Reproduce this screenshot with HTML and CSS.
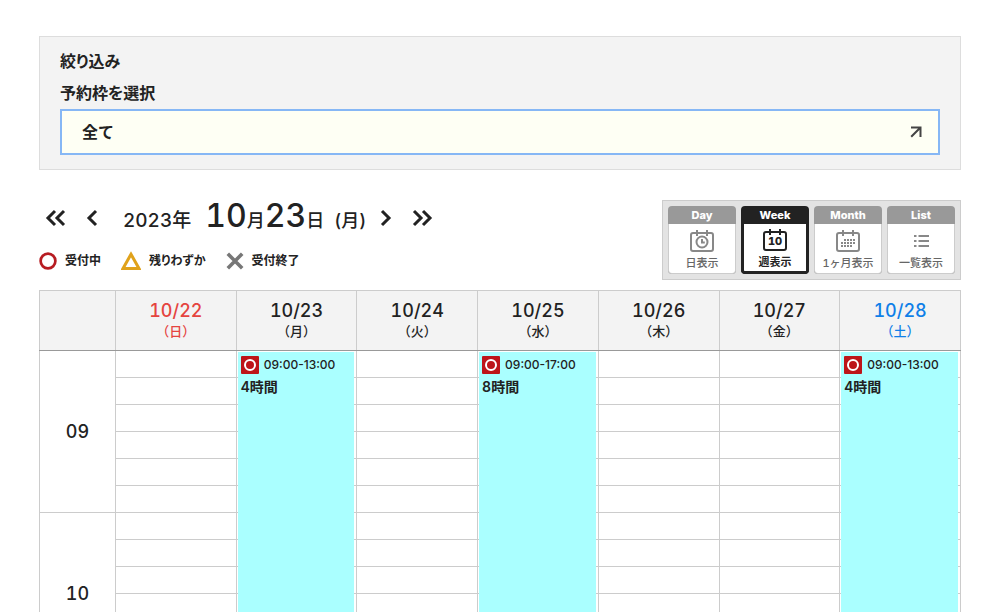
FILE: index.html
```html
<!DOCTYPE html>
<html lang="ja">
<head>
<meta charset="utf-8">
<meta name="viewport" content="width=device-width, initial-scale=1">
<title>予約カレンダー</title>
<link rel="stylesheet" href="styles.css">
</head>
<body>
<main class="page">
  <form class="filter">
    <h2 class="filter-title">絞り込み</h2>
    <label class="filter-label" for="slot">予約枠を選択</label>
    <div class="select-wrap">
      <select id="slot" class="select"><option>全て</option></select>
      <svg class="select-arrow" viewBox="0 0 12 12" aria-hidden="true"><path d="M1 1.5H10.5V11M10.2 1.8L1.2 10.8"/></svg>
    </div>
  </form>

  <div class="toolbar">
    <div class="toolbar-left">
      <div class="date-nav">
        <button class="nav-btn" type="button" aria-label="前の月"><svg viewBox="0 0 22 18"><path d="M10 2L3 9L10 16M19 2L12 9L19 16"/></svg></button>
        <button class="nav-btn nav-btn-single" type="button" aria-label="前の週"><svg viewBox="0 0 14 18"><path d="M11 2L4 9L11 16"/></svg></button>
        <h1 class="date"><span class="year">2023年</span><span class="day"><span class="num">10</span>月<span class="num">23</span>日</span><span class="dow">(月)</span></h1>
        <button class="nav-btn nav-btn-single" type="button" aria-label="次の週"><svg viewBox="0 0 14 18"><path d="M3 2L10 9L3 16"/></svg></button>
        <button class="nav-btn" type="button" aria-label="次の月"><svg viewBox="0 0 22 18"><path d="M3 2L10 9L3 16M12 2L19 9L12 16"/></svg></button>
      </div>
      <ul class="legend">
        <li class="legend-item"><svg class="mark mark-open" viewBox="0 0 20 20"><circle cx="10" cy="10" r="8.2"/></svg>受付中</li>
        <li class="legend-item"><svg class="mark mark-few" viewBox="0 0 20 20"><path d="M10 3.2L18 17.5H2Z"/></svg>残りわずか</li>
        <li class="legend-item"><svg class="mark mark-closed" viewBox="0 0 20 20"><path d="M2 2L18 18M18 2L2 18"/></svg>受付終了</li>
      </ul>
    </div>
    <nav class="views">
      <button class="view" type="button"><span class="view-name">Day</span>
        <span class="view-body"><svg class="view-icon" viewBox="0 0 26 24"><rect x="2" y="4" width="22" height="18" rx="2"/><path d="M8 1V7M18 1V7"/><circle cx="13" cy="13" r="5.5"/><path d="M13 10V13.5H15.8"/></svg><span>日表示</span></span></button>
      <button class="view view-active" type="button"><span class="view-name">Week</span>
        <span class="view-body"><svg class="view-icon" viewBox="0 0 26 24"><rect x="2" y="4" width="22" height="18" rx="2"/><path d="M8 1V7M18 1V7"/><text class="icon-num" x="13" y="17" text-anchor="middle">10</text></svg><span>週表示</span></span></button>
      <button class="view" type="button"><span class="view-name">Month</span>
        <span class="view-body"><svg class="view-icon" viewBox="0 0 26 24"><rect x="2" y="4" width="22" height="18" rx="2"/><path d="M8 1V7M18 1V7"/><path class="dots" d="M9 11H20M6 14H20M6 17H17"/></svg><span>1ヶ月表示</span></span></button>
      <button class="view" type="button"><span class="view-name">List</span>
        <span class="view-body"><svg class="view-icon" viewBox="0 0 26 24"><path d="M6 7H8.5M10.5 7H21M6 12H8.5M10.5 12H21M6 17H8.5M10.5 17H21"/></svg><span>一覧表示</span></span></button>
    </nav>
  </div>

  <table class="calendar">
    <colgroup><col class="col-hour"><col span="7"></colgroup>
    <thead>
      <tr>
        <th></th>
        <th class="sun">10/22<span>（日）</span></th>
        <th>10/23<span>（月）</span></th>
        <th>10/24<span>（火）</span></th>
        <th>10/25<span>（水）</span></th>
        <th>10/26<span>（木）</span></th>
        <th>10/27<span>（金）</span></th>
        <th class="sat">10/28<span>（土）</span></th>
      </tr>
    </thead>
    <tbody>
      <tr>
        <th class="hour" rowspan="6">09</th>
        <td></td>
        <td><a class="event hours-4" href="#"><span class="event-time"><svg viewBox="0 0 18 18"><rect width="18" height="18" rx="1"/><circle cx="9" cy="9" r="5"/></svg>09:00-13:00</span><span class="event-name">4時間</span></a></td>
        <td></td>
        <td><a class="event hours-8" href="#"><span class="event-time"><svg viewBox="0 0 18 18"><rect width="18" height="18" rx="1"/><circle cx="9" cy="9" r="5"/></svg>09:00-17:00</span><span class="event-name">8時間</span></a></td>
        <td></td>
        <td></td>
        <td><a class="event hours-4" href="#"><span class="event-time"><svg viewBox="0 0 18 18"><rect width="18" height="18" rx="1"/><circle cx="9" cy="9" r="5"/></svg>09:00-13:00</span><span class="event-name">4時間</span></a></td>
      </tr>
      <tr><td></td><td></td><td></td><td></td><td></td><td></td><td></td></tr>
      <tr><td></td><td></td><td></td><td></td><td></td><td></td><td></td></tr>
      <tr><td></td><td></td><td></td><td></td><td></td><td></td><td></td></tr>
      <tr><td></td><td></td><td></td><td></td><td></td><td></td><td></td></tr>
      <tr><td></td><td></td><td></td><td></td><td></td><td></td><td></td></tr>
      <tr><th class="hour" rowspan="6">10</th><td></td><td></td><td></td><td></td><td></td><td></td><td></td></tr>
      <tr><td></td><td></td><td></td><td></td><td></td><td></td><td></td></tr>
      <tr><td></td><td></td><td></td><td></td><td></td><td></td><td></td></tr>
      <tr><td></td><td></td><td></td><td></td><td></td><td></td><td></td></tr>
      <tr><td></td><td></td><td></td><td></td><td></td><td></td><td></td></tr>
      <tr><td></td><td></td><td></td><td></td><td></td><td></td><td></td></tr>
    </tbody>
  </table>
</main>
</body>
</html>
```
FILE: styles.css
```css
* { box-sizing: border-box; }

body {
  margin: 0;
  height: 100vh;
  overflow: hidden;
  background: #fff;
  color: #222;
  font-family: Inter, "Noto Sans CJK JP", sans-serif;
  font-weight: 500;
  font-variant-numeric: tabular-nums;
}

button, select { font: inherit; color: inherit; }
svg { display: block; fill: none; stroke: currentColor; }

.page { padding: 36px 39px 0; }

.filter {
  padding: 12px 20px 14px;
  border: 1px solid #ddd;
  background: #f3f3f3;
}
.filter-title, .filter-label {
  display: block;
  margin: 0;
  font-size: 16px;
  line-height: 24px;
  font-weight: 700;
  font-feature-settings: "palt";
}
.filter-title { margin-bottom: 8px; }
.select-wrap { position: relative; margin-top: 4px; }
.select {
  display: block;
  appearance: none;
  width: 100%;
  height: 46px;
  padding: 0 20px;
  border: 2px solid #86b7f5;
  border-radius: 0;
  outline: 0;
  background: #fefff4;
  font-size: 16px;
  font-weight: 700;
}
.select-arrow {
  position: absolute;
  top: 17px;
  right: 18px;
  width: 12px;
  height: 12px;
  color: #444;
  stroke-width: 2;
  pointer-events: none;
}

.toolbar {
  display: flex;
  justify-content: space-between;
  align-items: flex-start;
  margin: 30px 0 10px;
}
.date-nav { display: flex; align-items: center; height: 36px; padding-left: 6px; }
.nav-btn { padding: 0; border: 0; background: none; cursor: pointer; }
.nav-btn svg { height: 18px; stroke-width: 3; }
.nav-btn-single { margin: 0 18px; }
.date {
  display: flex;
  align-items: baseline;
  margin: 0 0 0 6px;
  font-size: 18px;
  line-height: 36px;
  font-weight: 500;
}
.year { font-size: 19px; }
.day { margin-left: 14px; }
.dow { margin-left: 10px; }
.num { font-size: 32px; }
.date + .nav-btn-single { margin-left: 13px; }

.legend {
  display: flex;
  gap: 20px;
  margin: 15px 0 0;
  padding: 0;
  list-style: none;
  font-size: 12px;
  line-height: 20px;
  font-weight: 700;
  font-feature-settings: "palt";
}
.legend-item { display: flex; align-items: center; gap: 8px; }
.mark { width: 18px; height: 18px; stroke-width: 3; }
.mark-open { color: #b71c22; }
.mark-few { width: 20px; height: 20px; color: #e0a21b; }
.mark-closed { color: #777; stroke-width: 4; }

.views {
  display: flex;
  gap: 5px;
  padding: 5px;
  border: 1px solid #ccc;
  background: #e3e3e3;
}
.view {
  display: flex;
  flex-direction: column;
  width: 68px;
  padding: 0;
  border: 0;
  border-radius: 4px;
  overflow: hidden;
  background: #999;
  color: #666;
  font-size: 11px;
  line-height: 16px;
}
.view-name {
  width: 100%;
  line-height: 18px;
  color: #fff;
  font-weight: 800;
}
.view-body {
  display: flex;
  flex-direction: column;
  align-items: center;
  width: 100%;
  height: 50px;
  padding-top: 5px;
  border: 1px solid #ccc;
  border-top: 0;
  border-radius: 0 0 4px 4px;
  background: #fff;
}
.view-icon { width: 26px; height: 24px; margin-bottom: 2px; color: #888; stroke-width: 2; }
.view-active { background: #222; color: #222; font-weight: 700; }
.view-active .view-body { padding-top: 4px; border: 3px solid #222; border-top: 0; }
.view-active .view-icon { color: #222; }
.icon-num { fill: currentColor; stroke: none; font-size: 11px; font-weight: 800; }
.dots { stroke-dasharray: 2 1; }

.calendar {
  width: 100%;
  border-collapse: collapse;
  table-layout: fixed;
}
.col-hour { width: 76px; }
.calendar th, .calendar td { padding: 0; border: 1px solid #ccc; }
.calendar thead th {
  height: 60px;
  padding-bottom: 2px;
  border-bottom-color: #999;
  background: #f3f3f3;
  font-size: 18px;
  line-height: 22px;
  font-weight: 500;
}
.calendar thead span { display: block; font-size: 13px; line-height: 18px; }
.calendar .sun { color: #e5443f; }
.calendar .sat { color: #0f7fe8; }
.calendar .hour { font-size: 18px; font-weight: 500; }
.calendar td { position: relative; height: 27px; }

.event {
  position: absolute;
  z-index: 1;
  top: 1px;
  left: 1px;
  right: 2px;
  padding: 4px 3px;
  background: #aff;
  color: #222;
  text-decoration: none;
}
.hours-4 { height: 647px; }
.hours-8 { height: 1295px; }
.event-time {
  display: flex;
  align-items: center;
  gap: 5px;
  font-size: 12px;
  line-height: 18px;
  font-variant-numeric: normal;
}
.event-time svg { width: 18px; height: 18px; stroke-width: 2; }
.event-time rect { fill: #bd1519; stroke: none; }
.event-time circle { stroke: #fff; }
.event-name { display: block; margin-top: 2px; font-size: 14px; line-height: 22px; font-weight: 600; }
```
